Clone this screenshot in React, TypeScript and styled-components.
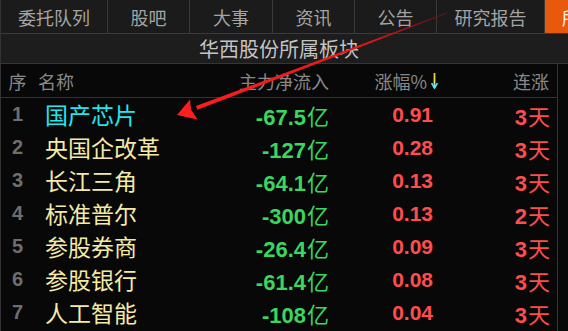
import React from 'react';
import styled, { createGlobalStyle } from 'styled-components';

const CJK = `"Noto Sans CJK SC", "Noto Sans", sans-serif`;
const NUM = `"Liberation Sans", "Noto Sans CJK SC", sans-serif`;

const GlobalStyle = createGlobalStyle`
    html, body {
        margin: 0;
        padding: 0;
        background: #080808;
        overflow: hidden;
    }
`;

type Sector = {
    name: string;
    flow: string;
    pct: string;
    days: number;
    hot?: boolean;
};

const tabs = [
    { label: '委托队列', width: 108 },
    { label: '股吧', width: 82 },
    { label: '大事', width: 83 },
    { label: '资讯', width: 82 },
    { label: '公告', width: 82 },
    { label: '研究报告', width: 108 },
    { label: '所属板块', width: 108, active: true },
];

const sectors: Sector[] = [
    { name: '国产芯片', flow: '-67.5', pct: '0.91', days: 3, hot: true },
    { name: '央国企改革', flow: '-127', pct: '0.28', days: 3 },
    { name: '长江三角', flow: '-64.1', pct: '0.13', days: 3 },
    { name: '标准普尔', flow: '-300', pct: '0.13', days: 2 },
    { name: '参股券商', flow: '-26.4', pct: '0.09', days: 3 },
    { name: '参股银行', flow: '-61.4', pct: '0.08', days: 3 },
    { name: '人工智能', flow: '-108', pct: '0.04', days: 3 },
];

export default function App() {
    return (
        <Panel>
            <GlobalStyle />
            <TabBar>
                {tabs.map((t) => (
                    <Tab key={t.label} $width={t.width} $active={!!t.active}>
                        {t.label}
                    </Tab>
                ))}
            </TabBar>
            <TitleBar>华西股份所属板块</TitleBar>
            <Body>
                <Table>
                    <HeaderRow>
                        <IndexCell $header>序</IndexCell>
                        <NameCell $header>名称</NameCell>
                        <RightCell>主力净流入</RightCell>
                        <RightCell $pad={3}>
                            涨幅%
                            <SortArrow />
                        </RightCell>
                        <RightCell $pad={1}>连涨</RightCell>
                    </HeaderRow>
                    {sectors.map((s, i) => (
                        <Row key={s.name}>
                            <IndexCell>{i + 1}</IndexCell>
                            <NameCell $hot={s.hot}>{s.name}</NameCell>
                            <UnitCell $color="#3ad660">
                                <b>{s.flow}</b>
                                <span>亿</span>
                            </UnitCell>
                            <PctCell>{s.pct}</PctCell>
                            <UnitCell $color="#ff4d4d">
                                <b>{s.days}</b>
                                <span>天</span>
                            </UnitCell>
                        </Row>
                    ))}
                </Table>
                <SideStrip />
            </Body>
            <Annotation />
        </Panel>
    );
}

const SortArrow = () => (
    <ArrowIcon width="7" height="16" viewBox="0 0 7 16">
        <defs>
            <linearGradient id="sortGrad" gradientUnits="userSpaceOnUse" x1="0" y1="0" x2="0" y2="16">
                <stop offset="0" stopColor="#f2c428" />
                <stop offset="0.55" stopColor="#f0e070" />
                <stop offset="1" stopColor="#48e4f4" />
            </linearGradient>
        </defs>
        <path d="M3.5 0 V15" stroke="url(#sortGrad)" strokeWidth="1.8" />
        <path d="M0.6 10.2 L3.5 15 L6.4 10.2" fill="none" stroke="#5ee6f2" strokeWidth="1.6" />
    </ArrowIcon>
);

// red pointer drawn over the list
const Annotation = () => (
    <Overlay width="568" height="331" viewBox="0 0 568 331">
        <defs>
            <linearGradient id="arrowGrad" gradientUnits="userSpaceOnUse" x1="447" y1="13" x2="190" y2="110">
                <stop offset="0" stopColor="#7a1010" stopOpacity="0.6" />
                <stop offset="0.3" stopColor="#e01818" />
                <stop offset="1" stopColor="#ff1e1e" />
            </linearGradient>
        </defs>
        <polygon points="447.2,13.5 446.8,12.5 196,106 197.4,109.8" fill="url(#arrowGrad)" />
        <polygon points="177,115 190,99.5 191,109.5 197.5,119.5" fill="#ff1e1e" />
    </Overlay>
);

const Panel = styled.div`
    position: relative;
    width: 568px;
    height: 331px;
    overflow: hidden;
    background: #080808;
    box-sizing: border-box;
    border-left: 1px solid #333;
    font-family: ${CJK};
`;

const TabBar = styled.div`
    display: flex;
    height: 33px;
    background: #1b1b1b;
    border-bottom: 1px solid #3a3a3a;
    margin-left: -1px;
`;

const Tab = styled.div<{ $width: number; $active: boolean }>`
    flex: 0 0 ${({ $width }) => $width}px;
    box-sizing: border-box;
    display: flex;
    align-items: center;
    justify-content: ${({ $active }) => ($active ? 'flex-start' : 'center')};
    padding-left: ${({ $active }) => ($active ? 17 : 0)}px;
    border-right: 1px solid #3a3a3a;
    background: ${({ $active }) => ($active ? '#e8590c' : 'transparent')};
    color: ${({ $active }) => ($active ? '#fff2ee' : '#a4a4a4')};
    font-size: 18px;
    white-space: nowrap;
    overflow: hidden;
    &:first-child {
        border-left: 1px solid #3a3a3a;
    }
`;

const TitleBar = styled.div`
    height: 29px;
    display: flex;
    align-items: center;
    justify-content: center;
    padding-right: 11px;
    background: #1d1d1d;
    border-bottom: 1px solid #363636;
    color: #c4c4c4;
    font-size: 20px;
`;

const Body = styled.div`
    display: flex;
    height: 300px;
`;

const Table = styled.div`
    width: 557px;
    flex: 0 0 557px;
    box-sizing: border-box;
    border-right: 1px solid #343434;
`;

const SideStrip = styled.div`
    flex: 1;
`;

const gridCols = `
    display: grid;
    grid-template-columns: 32px 208px 88px 112px 1fr;
    padding-right: 7px;
    height: 33px;
    align-items: center;
`;

const HeaderRow = styled.div`
    ${gridCols}
    border-bottom: 1px solid #333;
    color: #888;
    font-size: 18px;
`;

const Row = styled.div`
    ${gridCols}
`;

const IndexCell = styled.div<{ $header?: boolean }>`
    text-align: center;
    font-family: ${({ $header }) => ($header ? CJK : NUM)};
    font-weight: ${({ $header }) => ($header ? 400 : 700)};
    font-size: ${({ $header }) => ($header ? 18 : 20)}px;
    color: ${({ $header }) => ($header ? '#888' : '#6e6e6e')};
    padding-left: 1px;
`;

const NameCell = styled.div<{ $header?: boolean; $hot?: boolean }>`
    padding-left: ${({ $header }) => ($header ? 5 : 12)}px;
    font-size: ${({ $header }) => ($header ? 18 : 23)}px;
    color: ${({ $header, $hot }) => ($header ? '#888' : $hot ? '#1ee8ee' : '#f4eaa6')};
    white-space: nowrap;
    line-height: 1;
`;

const RightCell = styled.div<{ $pad?: number }>`
    display: flex;
    justify-content: flex-end;
    align-items: center;
    white-space: nowrap;
    padding-right: ${({ $pad }) => $pad ?? 0}px;
`;

const ArrowIcon = styled.svg`
    display: block;
    margin-left: 4px;
    margin-top: 1px;
`;

const UnitCell = styled.div<{ $color: string }>`
    display: flex;
    justify-content: flex-end;
    align-items: baseline;
    white-space: nowrap;
    color: ${({ $color }) => $color};
    font-size: 22px;
    b {
        font-family: ${NUM};
        font-weight: 700;
    }
    span {
        margin-left: 1px;
    }
`;

const PctCell = styled(RightCell)`
    padding-right: 8px;
    font-family: ${NUM};
    font-weight: 700;
    font-size: 21px;
    color: #ff4d4d;
`;

const Overlay = styled.svg`
    position: absolute;
    left: -1px;
    top: 0;
    pointer-events: none;
`;
